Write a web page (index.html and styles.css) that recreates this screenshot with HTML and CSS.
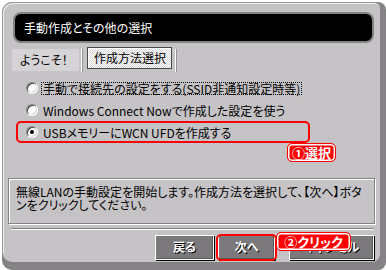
FILE: index.html
```html
<!DOCTYPE html>
<html lang="ja">
<head>
<meta charset="utf-8">
<link rel="stylesheet" href="styles.css">
</head>
<body>
<div class="window">
  <div class="panel">
    <div class="title">手動作成とその他の選択</div>
    <div class="tabs">
      <div class="tab tab-welcome">ようこそ！</div>
      <span class="tab-sep"></span>
      <div class="tab tab-active">作成方法選択</div>
      <span class="tab-sep"></span>
    </div>
    <div class="options">
      <div class="option"><span class="radio"></span><span class="label focus">手動で接続先の設定をする(SSID非通知設定時等)</span></div>
      <div class="option"><span class="radio"></span><span class="label">Windows Connect Nowで作成した設定を使う</span></div>
      <div class="option highlight"><span class="radio checked"></span><span class="label">USBメモリーにWCN UFDを作成する</span><span class="callout callout-select">①選択</span></div>
    </div>
    <div class="desc">無線LANの手動設定を開始します。作成方法を選択して、【次へ】ボタ<br>ンをクリックしてください。</div>
    <div class="sep"></div>
    <div class="buttons">
      <div class="btn btn-back">戻る</div>
      <div class="btn btn-next">次へ<span class="ring"></span></div>
      <div class="btn btn-cancel">キャンセル</div>
      <span class="callout callout-click">②クリック</span>
    </div>
  </div>
</div>
</body>
</html>
```
FILE: styles.css
```css
* { box-sizing: border-box; }
html, body { margin: 0; padding: 0; background: #fff; }
body {
  width: 386px;
  height: 270px;
  overflow: hidden;
  font-family: "Noto Sans CJK JP", sans-serif;
  font-size: 12px;
  font-feature-settings: "palt" 1;
  color: #000;
}
.window {
  margin: 2px 0 0 2px;
  width: 384px;
  height: 268px;
  background: #848284;
  border-radius: 10px 8px 8px 10px;
}
.panel {
  position: relative;
  width: 378px;
  height: 260px;
  background: #c6c3c6;
  border-top: 1px solid #9c9a9c;
  border-left: 1px solid #9c9a9c;
  box-shadow: inset 1px 1px 0 #efefef;
  border-radius: 10px 6px 8px 10px;
  display: flex;
  flex-direction: column;
}
.title {
  margin: 9px 6px 0 10px;
  height: 31px;
  background: #000;
  border: 2px solid #848284;
  border-radius: 8px;
  color: #fff;
  font-size: 12px;
  line-height: 27px;
  padding-left: 9px;
}
.tabs {
  margin-top: 4px;
  height: 24px;
  display: flex;
  align-items: flex-start;
}
.tab { height: 22px; line-height: 22px; }
.tab-welcome {
  margin: 2px 0 0 9px;
  width: 67px;
  background: #d6d3d6;
  padding-left: 8px;
}
.tab-sep {
  margin: 2px 0 0 2px;
  width: 2px;
  height: 23px;
  border-left: 1px solid #fff;
  border-right: 1px solid #949294;
}
.tab-active {
  margin-left: 4px;
  width: 85px;
  line-height: 20px;
  border: 1px solid #4a494a;
  box-shadow: inset 1px 1px 0 #fff;
  background: repeating-conic-gradient(#ffffff 0 25%, #d6d3d6 0 50%) 0 0 / 2px 2px;
  padding-left: 6px;
}
.tab-active + .tab-sep { margin-left: 3px; }
.options {
  margin: 6px 0 0 13px;
  display: flex;
  flex-direction: column;
}
.option {
  position: relative;
  width: 294px;
  height: 22px;
  border: 2px solid transparent;
  border-radius: 5px;
  padding-left: 8px;
  display: flex;
  align-items: center;
}
.option.highlight { border-color: #f00; }
.radio {
  position: relative;
  flex: none;
  width: 12px;
  height: 12px;
  border-radius: 50%;
  background: #fff;
  border: 1px solid;
  border-color: #848284 #fff #fff #848284;
  box-shadow: inset 1px 1px 0 #424142, inset -1px -1px 0 #d6d3d6;
}
.radio.checked::after {
  content: "";
  position: absolute;
  left: 3px;
  top: 3px;
  width: 4px;
  height: 4px;
  border-radius: 50%;
  background: #000;
}
.label {
  margin-left: 3px;
  padding: 0 1px;
  border: 1px solid transparent;
  line-height: 11px;
  white-space: nowrap;
}
.label.focus { border: 1px dotted #000; }
.callout {
  position: absolute;
  background: #f00;
  border: 1px solid #f00;
  box-shadow: inset 0 0 0 1.5px #fff;
  border-radius: 5px;
  color: #fff;
  font-weight: bold;
  font-size: 13px;
  text-align: center;
  white-space: nowrap;
}
.callout-select {
  left: 269px;
  top: calc(100% + 2px);
  width: 49px;
  height: 19px;
  line-height: 17px;
}
.desc {
  margin: 35px 0 0 5px;
  width: 367px;
  height: 46px;
  border: 1px solid #848284;
  box-shadow: 1px 1px 0 #fff, inset 1px 1px 0 #fff;
  padding: 6px 0 0 7px;
  line-height: 13px;
  white-space: nowrap;
}
.sep {
  margin: 4px 0 0 8px;
  width: 363px;
  height: 2px;
  border-top: 1px solid #848284;
  border-bottom: 1px solid #fff;
}
.buttons {
  position: relative;
  margin-top: 5px;
  height: 25px;
  display: flex;
  justify-content: flex-end;
  padding-right: 6px;
}
.btn {
  position: relative;
  height: 25px;
  background: #7b797b;
  border: 1px solid #fff;
  box-shadow: 1px 1px 0 #000, inset -1px -1px 0 #5a595a;
  color: #fff;
  font-weight: bold;
  font-size: 12px;
  line-height: 22px;
  text-align: center;
  text-shadow: 1px 1px 0 #000;
}
.btn-back { width: 59px; }
.btn-next { width: 57px; margin-left: 4px; }
.btn-cancel { width: 85px; margin-left: 14px; }
.ring {
  position: absolute;
  left: -3px;
  top: -2px;
  right: -3px;
  bottom: -2px;
  border: 2px solid #f00;
  border-radius: 5px;
}
.callout-click {
  left: 273px;
  top: -3px;
  width: 75px;
  height: 19px;
  line-height: 17px;
}
```
